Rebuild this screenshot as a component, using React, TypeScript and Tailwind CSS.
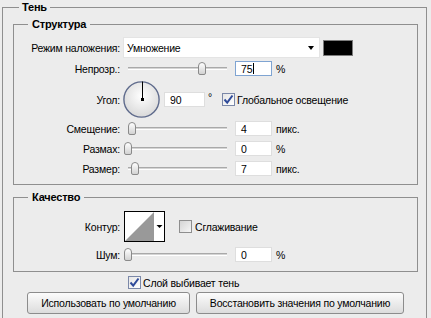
import React from "react";

function Slider({ at }: { at: number }) {
  return (
    <div className="relative ml-[4px] h-[13px] w-[107px] shrink-0">
      <div className="absolute left-[4px] right-[4px] top-[5px] h-[3px] border-y border-t-[#a9a9a9] border-b-white bg-[#d4d4d4]" />
      <div
        className="absolute top-0 h-[13px] w-[8px] rounded-t-[4px] rounded-b-[2px] border border-[#8a8a8a] bg-gradient-to-b from-white to-[#d2d2d2]"
        style={{ left: at }}
      />
    </div>
  );
}

function Field({ value, wide, focus }: { value: string; wide?: boolean; focus?: boolean }) {
  return (
    <div
      className={
        "ml-[4px] flex h-[15px] shrink-0 items-center border bg-white pl-[5px] " +
        (wide ? "w-[41px] " : "w-[37px] ") +
        (focus ? "border-[#7fa4d2]" : "border-[#dedede]")
      }
    >
      <span>{value}</span>
      {focus && <span className="ml-[1px] h-[11px] w-px bg-black" />}
    </div>
  );
}

function Check({ on }: { on?: boolean }) {
  return (
    <div
      className={
        "flex h-[13px] w-[13px] shrink-0 items-center justify-center border bg-gradient-to-br " +
        (on ? "border-[#7b88a8] from-[#e6e6e6] to-white" : "border-[#8e8e8e] from-[#d4d4d4] to-[#f6f6f6]")
      }
    >
      {on && (
        <svg width="11" height="11" viewBox="0 0 11 11">
          <path d="M1.5 5.5 L4.2 8.6 L9.5 1.5" stroke="#2f4b9a" strokeWidth="2" fill="none" />
        </svg>
      )}
    </div>
  );
}

function Label({ children }: { children: React.ReactNode }) {
  return <span className="w-[106px] shrink-0 text-right">{children}</span>;
}

function Dial() {
  return (
    <svg width="37" height="37" viewBox="0 0 37 37" className="ml-[3px] shrink-0">
      <defs>
        <radialGradient id="dialFill" cx="50%" cy="40%" r="60%">
          <stop offset="0" stopColor="#ffffff" />
          <stop offset="1" stopColor="#d9d9d9" />
        </radialGradient>
      </defs>
      <circle cx="18.5" cy="18.5" r="17.6" fill="url(#dialFill)" stroke="#5f6b8c" strokeWidth="1.4" />
      <line x1="19.5" y1="18.5" x2="19.5" y2="0.5" stroke="#000" strokeWidth="1" />
      <rect x="18" y="17" width="3" height="3" fill="#000" />
    </svg>
  );
}

function Contour() {
  return (
    <svg width="41" height="31" viewBox="0 0 41 31" className="ml-[4px] shrink-0">
      <rect x="0.5" y="0.5" width="40" height="30" fill="#fff" stroke="#000" />
      <polygon points="1,30 30,1 30,30" fill="#999999" />
      <polygon points="32.5,14 38.5,14 35.5,17" fill="#000" />
    </svg>
  );
}

export default function App() {
  return (
    <div className="min-h-screen bg-[#ececec] font-['Liberation_Sans',Arial,sans-serif] text-[10.5px] leading-[14px] tracking-[-0.2px] text-black">
      <fieldset className="ml-[2px] w-[425px] border border-[#8f8f8f] pb-[12px] pl-[10px] pr-[8px] pt-[3px]">
        <legend className="ml-[6px] px-[3px] text-[11px] font-bold">Тень</legend>

        <fieldset className="border border-[#8f8f8f] pb-[8px] pt-[6px]">
          <legend className="ml-[14px] px-[4px] text-[11px] font-bold">Структура</legend>

          <div className="flex h-[21px] items-center">
            <Label>Режим наложения:</Label>
            <div className="ml-[3px] flex h-[21px] w-[197px] shrink-0 items-center justify-between border border-[#e4e4e4] bg-white pl-[3px] pr-[5px]">
              <span>Умножение</span>
              <span className="h-0 w-0 border-x-[3px] border-t-[4px] border-x-transparent border-t-black" />
            </div>
            <div className="ml-[3px] h-[16px] w-[30px] shrink-0 border border-[#7c7c7c] bg-black" />
          </div>

          <div className="mt-[3px] flex h-[15px] items-center">
            <Label>Непрозр.:</Label>
            <Slider at={74} />
            <Field value="75" focus />
            <span className="ml-[4px]">%</span>
          </div>

          <div className="mt-[5px] flex h-[37px] items-center">
            <Label>Угол:</Label>
            <Dial />
            <Field value="90" wide />
            <span className="ml-[3px] self-start pt-[9px]">°</span>
            <div className="ml-[10px]">
              <Check on />
            </div>
            <span className="ml-[2px]">Глобальное освещение</span>
          </div>

          <div className="mt-[3px] flex h-[15px] items-center">
            <Label>Смещение:</Label>
            <Slider at={4} />
            <Field value="4" />
            <span className="ml-[4px]">пикс.</span>
          </div>

          <div className="mt-[5px] flex h-[15px] items-center">
            <Label>Размах:</Label>
            <Slider at={0} />
            <Field value="0" />
            <span className="ml-[4px]">%</span>
          </div>

          <div className="mt-[5px] flex h-[15px] items-center">
            <Label>Размер:</Label>
            <Slider at={7} />
            <Field value="7" />
            <span className="ml-[4px]">пикс.</span>
          </div>
        </fieldset>

        <fieldset className="mt-[5px] border border-[#8f8f8f] pb-[9px] pt-[7px]">
          <legend className="ml-[14px] px-[4px] text-[11px] font-bold">Качество</legend>

          <div className="flex h-[31px] items-center">
            <Label>Контур:</Label>
            <Contour />
            <div className="ml-[14px]">
              <Check />
            </div>
            <span className="ml-[3px]">Сглаживание</span>
          </div>

          <div className="mt-[5px] flex h-[15px] items-center">
            <Label>Шум:</Label>
            <Slider at={0} />
            <Field value="0" />
            <span className="ml-[4px]">%</span>
          </div>
        </fieldset>

        <div className="ml-[115px] mt-[4px] flex h-[13px] items-center">
          <Check on />
          <span className="ml-[2px]">Слой выбивает тень</span>
        </div>

        <div className="mt-[3px] flex justify-center gap-[6px]">
          <button className="h-[22px] w-[163px] rounded-[3px] border border-[#8c8c8c] bg-gradient-to-b from-[#fcfcfc] to-[#dcdcdc]">
            Использовать по умолчанию
          </button>
          <button className="h-[22px] w-[208px] rounded-[3px] border border-[#8c8c8c] bg-gradient-to-b from-[#fcfcfc] to-[#dcdcdc]">
            Восстановить значения по умолчанию
          </button>
        </div>
      </fieldset>
    </div>
  );
}
